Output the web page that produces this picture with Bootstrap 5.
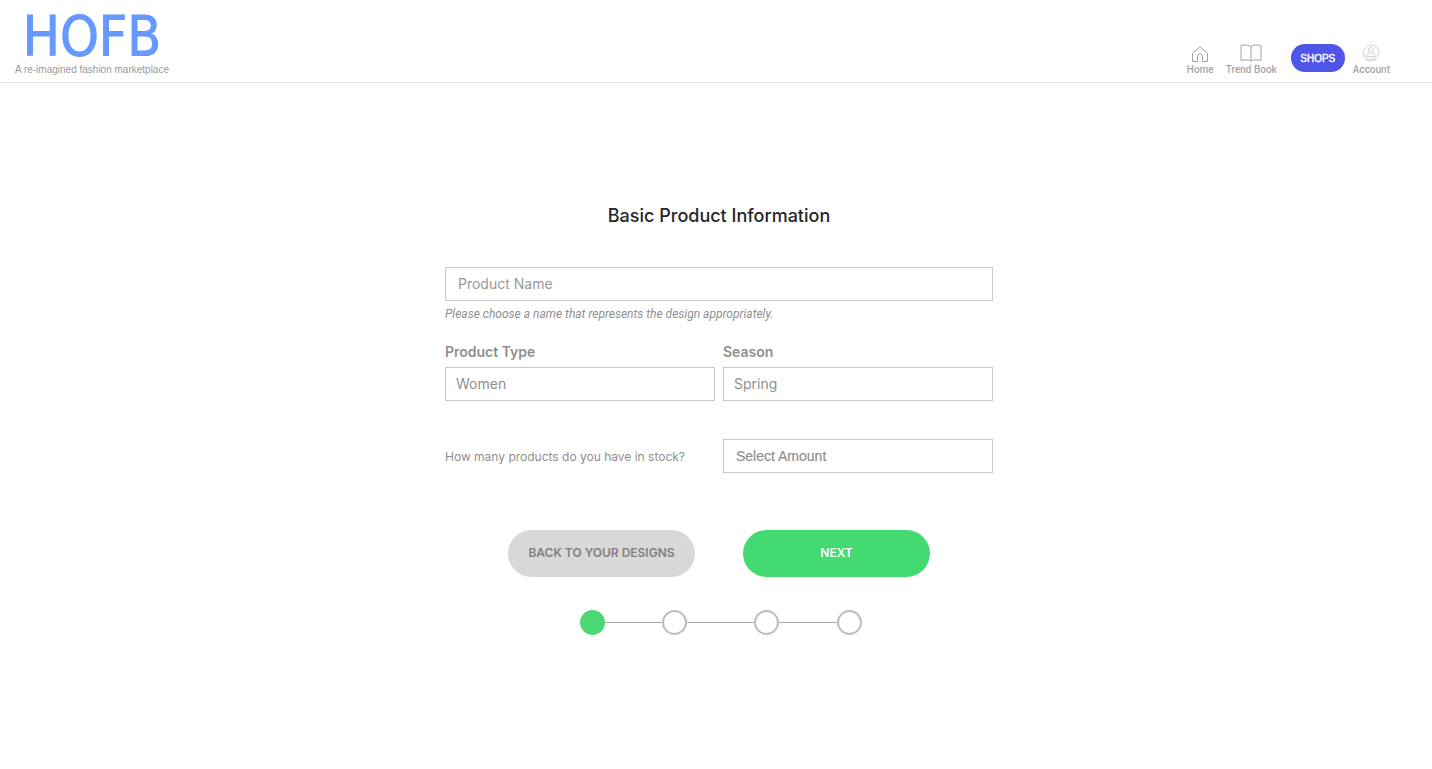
<!DOCTYPE html>
<html lang="en">
<head>
<meta charset="utf-8">
<meta name="viewport" content="width=device-width, initial-scale=1">
<title>HOFB – Basic Product Information</title>
<link href="https://cdn.jsdelivr.net/npm/bootstrap@5.3.0/dist/css/bootstrap.min.css" rel="stylesheet">
<style>
body { font-family: Inter, "Liberation Sans", sans-serif; color: #8f8f8f; background: #fff; }
.site-header { border-bottom: 1px solid #e2e2e2; border-radius: 4px; min-height: 83px; padding: 9px 42px 6px 15px; }
.brand { font-family: "Liberation Sans", sans-serif; text-decoration: none; color: #999; }
.brand-name { font-family: "DejaVu Sans Condensed", "DejaVu Sans", sans-serif; font-size: 55px; line-height: 55px; color: #6699ff; -webkit-text-stroke: 1px #6699ff; }
.brand-tag { font-size: 10px; line-height: 12px; }
.site-nav { font-family: Roboto, sans-serif; font-size: 10px; line-height: 12px; font-weight: 500; }
.site-nav a { color: #a6a6a6; text-decoration: none; }
.site-nav svg { display: block; margin: 0 auto 2px; fill: none; stroke: #a2a2a2; }
.site-nav .icon-account { stroke: #d2d2d2; }
.btn-shops { width: 54px; height: 28px; margin: 0 8px 4px 14px; padding: 0; border: 0; border-radius: 14px; background: #4f55e8; color: #fff; font: 500 10px "Liberation Sans", sans-serif; -webkit-text-stroke: 0.4px #fff; }
.page { padding-left: 6px; }
.product-form { max-width: 548px; padding-top: 121px; }
h1 { font-size: 18px; line-height: 24px; font-weight: 500; color: #262626; margin-bottom: 39px; }
.field { height: 34px; padding: 0 12px 2px; border: 1px solid #c8c8c8; border-radius: 0; font-size: 14px; color: #8f8f8f; background-image: none; }
.field::placeholder { color: #999; }
select.field { padding: 0 10px 2px; }
select.field-amount { padding: 0 12px; font-family: "Liberation Sans", sans-serif; -webkit-text-stroke: 0.2px #8f8f8f; }
.hint { font-family: Roboto, sans-serif; font-size: 12px; line-height: 16px; margin-top: 5px; font-style: italic; }
.field-label { font-size: 14px; line-height: 20px; font-weight: 600; margin-bottom: 5px; }
.question { font-size: 12px; line-height: 18px; padding-top: 2px; }
.amount-row { margin-top: 38px; }
.actions { margin-top: 57px; }
.btn-step { width: 187px; height: 47px; border: 0; border-radius: 24px; font-size: 12px; font-weight: 600; padding: 0 0 2px; }
.btn-back { background: #d8d8d8; color: #7f7f7f; }
.btn-next { background: #43da71; color: #fff; }
.steps { padding: 33px 0 0 3px; }
.stepper { width: 282px; }
.dot { width: 25px; height: 25px; border: 2px solid #bdbdbd; border-radius: 50%; }
.dot.current { background: #4ad872; border-color: #4ad872; }
.track { flex: 7; height: 1px; background: #aaa; }
.track-long { flex: 8; }
</style>
</head>
<body>
<header class="site-header d-flex justify-content-between align-items-end">
  <a class="brand d-flex flex-column align-items-center" href="#">
    <span class="brand-name">HOFB</span>
    <span class="brand-tag">A re-imagined fashion marketplace</span>
  </a>
  <nav class="site-nav d-flex align-items-end" aria-label="Main">
    <a href="#" class="me-2 pe-1">
      <svg width="18" height="16" viewBox="0 0 18 16"><path d="M1.500 7.200 9 .8l7.500 6.400V15.500H11.500V10.500a2.500 2.500 0 0 0-5 0V15.500H1.500Z"/></svg>
      Home
    </a>
    <a href="#">
      <svg width="22" height="18" viewBox="0 0 22 18"><path d="M11 2.500C9 .8 5 .6 1 1.500V16.500C5 15.600 9 15.600 11 17C13 15.600 17 15.600 21 16.500V1.500C17 .6 13 .8 11 2.500V17"/></svg>
      Trend Book
    </a>
    <button type="button" class="btn-shops">SHOPS</button>
    <a href="#">
      <svg class="icon-account" width="18" height="18" viewBox="0 0 18 18"><circle cx="9" cy="9" r="8"/><circle cx="9" cy="6" r="2.500"/><path d="M7.500 8.300V9.500C5.500 10.200 4 10.500 4 12.500H14C14 10.500 12.500 10.200 10.500 9.500V8.300M4 15H14"/></svg>
      Account
    </a>
  </nav>
</header>
<main class="page">
  <form class="product-form mx-auto">
    <h1 class="text-center">Basic Product Information</h1>
    <input class="form-control field" type="text" aria-label="Product Name" placeholder="Product Name">
    <p class="hint mb-0">Please choose a name that represents the design appropriately.</p>
    <div class="row gx-2 mt-3 pt-1">
      <div class="col-6">
        <label class="field-label d-block" for="type">Product Type</label>
        <select class="form-select field" id="type"><option>Women</option></select>
      </div>
      <div class="col-6">
        <label class="field-label d-block" for="season">Season</label>
        <select class="form-select field" id="season"><option>Spring</option></select>
      </div>
    </div>
    <div class="row gx-2 align-items-center amount-row">
      <div class="col-6"><label class="question d-block" for="amount">How many products do you have in stock?</label></div>
      <div class="col-6"><select class="form-select field field-amount" id="amount"><option>Select Amount</option></select></div>
    </div>
    <div class="actions d-flex justify-content-center gap-5">
      <button type="button" class="btn-step btn-back">BACK TO YOUR DESIGNS</button>
      <button type="submit" class="btn-step btn-next">NEXT</button>
    </div>
    <div class="steps d-flex justify-content-center">
      <div class="stepper d-flex align-items-center">
        <span class="dot current"></span><span class="track"></span><span class="dot"></span><span class="track track-long"></span><span class="dot"></span><span class="track"></span><span class="dot"></span>
      </div>
    </div>
  </form>
</main>
<script src="https://cdn.jsdelivr.net/npm/bootstrap@5.3.0/dist/js/bootstrap.bundle.min.js"></script>
</body>
</html>
